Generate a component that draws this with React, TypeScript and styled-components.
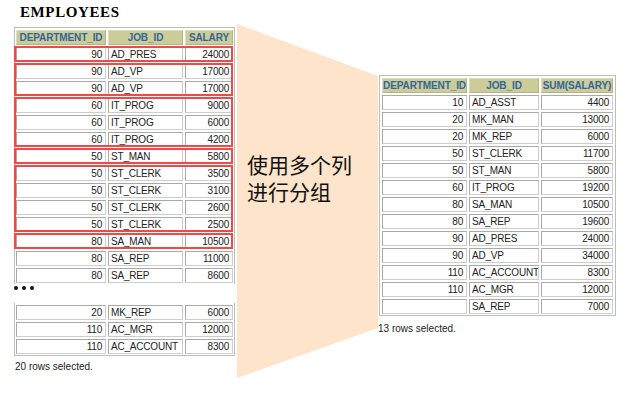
import React from 'react';
import styled, { createGlobalStyle } from 'styled-components';

const Global = createGlobalStyle`
  html, body { margin: 0; padding: 0; background: #fff; }
  body { font-family: "Liberation Sans", Arial, sans-serif; }
`;

const Page = styled.div`
  width: 631px;
  height: 394px;
  overflow: hidden;
  box-sizing: border-box;
  padding-left: 14px;
  display: flex;
  align-items: flex-start;
  background: #fff;
`;

const LeftCol = styled.div`
  width: 223px;
  flex-shrink: 0;
  display: flex;
  flex-direction: column;
  align-items: flex-start;
`;

const Title = styled.div`
  font-family: "Liberation Serif", "Times New Roman", serif;
  font-weight: bold;
  font-size: 15px;
  letter-spacing: 0.6px;
  line-height: 20px;
  height: 25px;
  padding-top: 2px;
  margin-left: 6px;
  color: #000;
`;

type Open = 'top' | 'bottom' | 'none';

const Frame = styled.div<{ $open: Open; $padX: number; $padB: number }>`
  display: flex;
  flex-direction: column;
  gap: 2px;
  border: 1px solid #bdbdbd;
  border-top-width: ${(p) => (p.$open === 'top' ? 0 : 1)}px;
  border-bottom-width: ${(p) => (p.$open === 'bottom' ? 0 : 1)}px;
  padding: 2px ${(p) => p.$padX}px ${(p) => p.$padB}px;
`;

const Row = styled.div<{ $cols: string }>`
  display: grid;
  grid-template-columns: ${(p) => p.$cols};
  column-gap: 2px;
`;

const Cell = styled.div<{ $align: 'left' | 'right' }>`
  box-sizing: border-box;
  height: 15px;
  padding: ${(p) => (p.$align === 'left' ? '0 1px 0 2px' : '0 3px 0 1px')};
  font-size: 10px;
  line-height: 13px;
  letter-spacing: -0.2px;
  color: #222;
  white-space: nowrap;
  overflow: hidden;
  text-align: ${(p) => p.$align};
  background: #fff;
  border: 1px solid;
  border-color: #a9a9a9 #cdcdcd #cdcdcd #a9a9a9;
`;

const HeadCell = styled.div`
  box-sizing: border-box;
  height: 15px;
  padding: 0;
  font-size: 10px;
  font-weight: bold;
  line-height: 13px;
  letter-spacing: -0.1px;
  color: #336699;
  text-align: center;
  white-space: nowrap;
  overflow: hidden;
  background: #cccc99;
  border: 1px solid;
  border-color: #dcdcc0 #b4b48a #b4b48a #dcdcc0;
`;

const Group = styled.div`
  position: relative;
  display: flex;
  flex-direction: column;
  gap: 2px;
  &::after {
    content: '';
    position: absolute;
    top: -1px;
    bottom: 0;
    left: -2px;
    right: 0;
    border: 2px solid #ee4a4a;
    pointer-events: none;
    z-index: 1;
  }
`;

const Dots = styled.div`
  display: flex;
  gap: 4px;
  margin-top: 2px;
  height: 4px;
`;

const Dot = styled.span`
  width: 4px;
  height: 4px;
  border-radius: 50%;
  background: #111;
`;

const Spacer = styled.div<{ $h: number }>`
  height: ${(p) => p.$h}px;
`;

const Caption = styled.div<{ $mt: number; $ml: number }>`
  font-size: 10px;
  line-height: 12px;
  color: #222;
  margin-top: ${(p) => p.$mt}px;
  margin-left: ${(p) => p.$ml}px;
  white-space: nowrap;
`;

const Funnel = styled.div`
  flex-shrink: 0;
  width: 141px;
  height: 354px;
  margin-top: 24px;
  box-sizing: border-box;
  padding: 127px 0 0 10px;
  background: #fee4ca;
  clip-path: polygon(0 0, 100% 52px, 100% 304px, 0 100%);
`;

const FunnelLine = styled.div`
  font-family: "Noto Sans CJK SC", "Noto Sans", sans-serif;
  font-size: 21px;
  line-height: 27px;
  height: 27px;
  color: #111;
  white-space: nowrap;
`;

const RightCol = styled.div`
  flex-shrink: 0;
  margin-top: 75px;
  margin-left: 1px;
  display: flex;
  flex-direction: column;
  align-items: flex-start;
`;

type Rec = [string, string, string];

const LEFT_COLS = '90px 75px 48px';
const RIGHT_COLS = '85px 70px 72px';

const DataRow: React.FC<{ r: Rec; cols: string }> = ({ r, cols }) => (
  <Row $cols={cols}>
    <Cell $align="right">{r[0]}</Cell>
    <Cell $align="left">{r[1]}</Cell>
    <Cell $align="right">{r[2]}</Cell>
  </Row>
);

const HeadRow: React.FC<{ h: Rec; cols: string }> = ({ h, cols }) => (
  <Row $cols={cols}>
    {h.map((t) => (
      <HeadCell key={t}>{t}</HeadCell>
    ))}
  </Row>
);

const groups: { boxed: boolean; rows: Rec[] }[] = [
  { boxed: true, rows: [['90', 'AD_PRES', '24000']] },
  { boxed: true, rows: [['90', 'AD_VP', '17000'], ['90', 'AD_VP', '17000']] },
  {
    boxed: true,
    rows: [
      ['60', 'IT_PROG', '9000'],
      ['60', 'IT_PROG', '6000'],
      ['60', 'IT_PROG', '4200'],
    ],
  },
  { boxed: true, rows: [['50', 'ST_MAN', '5800']] },
  {
    boxed: true,
    rows: [
      ['50', 'ST_CLERK', '3500'],
      ['50', 'ST_CLERK', '3100'],
      ['50', 'ST_CLERK', '2600'],
      ['50', 'ST_CLERK', '2500'],
    ],
  },
  { boxed: true, rows: [['80', 'SA_MAN', '10500']] },
  { boxed: false, rows: [['80', 'SA_REP', '11000'], ['80', 'SA_REP', '8600']] },
];

const tail: Rec[] = [
  ['20', 'MK_REP', '6000'],
  ['110', 'AC_MGR', '12000'],
  ['110', 'AC_ACCOUNT', '8300'],
];

const summary: Rec[] = [
  ['10', 'AD_ASST', '4400'],
  ['20', 'MK_MAN', '13000'],
  ['20', 'MK_REP', '6000'],
  ['50', 'ST_CLERK', '11700'],
  ['50', 'ST_MAN', '5800'],
  ['60', 'IT_PROG', '19200'],
  ['80', 'SA_MAN', '10500'],
  ['80', 'SA_REP', '19600'],
  ['90', 'AD_PRES', '24000'],
  ['90', 'AD_VP', '34000'],
  ['110', 'AC_ACCOUNT', '8300'],
  ['110', 'AC_MGR', '12000'],
  ['', 'SA_REP', '7000'],
];

export default function App() {
  return (
    <>
      <Global />
      <Page>
        <LeftCol>
          <Title>EMPLOYEES</Title>
          <Frame $open="bottom" $padX={1} $padB={1}>
            <HeadRow h={['DEPARTMENT_ID', 'JOB_ID', 'SALARY']} cols={LEFT_COLS} />
            {groups.map((g, i) =>
              g.boxed ? (
                <Group key={i}>
                  {g.rows.map((r, j) => (
                    <DataRow key={j} r={r} cols={LEFT_COLS} />
                  ))}
                </Group>
              ) : (
                g.rows.map((r, j) => <DataRow key={`${i}-${j}`} r={r} cols={LEFT_COLS} />)
              )
            )}
          </Frame>
          <Dots>
            <Dot />
            <Dot />
            <Dot />
          </Dots>
          <Spacer $h={13} />
          <Frame $open="top" $padX={1} $padB={1}>
            {tail.map((r, j) => (
              <DataRow key={j} r={r} cols={LEFT_COLS} />
            ))}
          </Frame>
          <Caption $mt={5} $ml={1}>20 rows selected.</Caption>
        </LeftCol>
        <Funnel>
          <FunnelLine>使用多个列</FunnelLine>
          <FunnelLine>进行分组</FunnelLine>
        </Funnel>
        <RightCol>
          <Frame $open="none" $padX={2} $padB={1}>
            <HeadRow h={['DEPARTMENT_ID', 'JOB_ID', 'SUM(SALARY)']} cols={RIGHT_COLS} />
            {summary.map((r, j) => (
              <DataRow key={j} r={r} cols={RIGHT_COLS} />
            ))}
          </Frame>
          <Caption $mt={7} $ml={-1}>13 rows selected.</Caption>
        </RightCol>
      </Page>
    </>
  );
}
